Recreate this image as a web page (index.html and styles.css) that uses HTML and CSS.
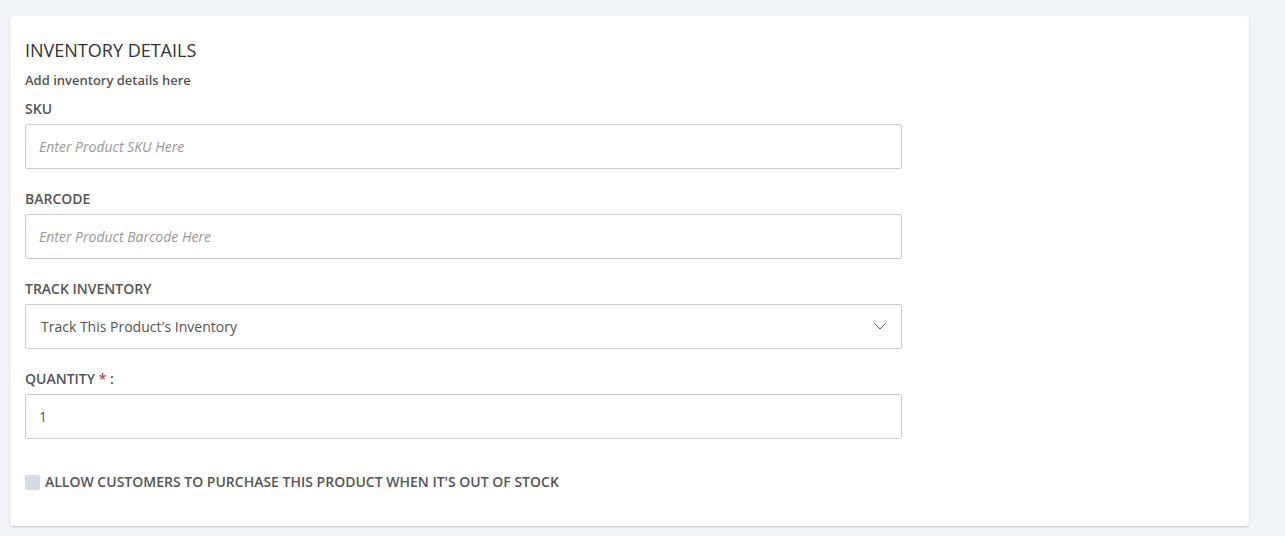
FILE: index.html
```html
<!DOCTYPE html>
<html>
<head>
<meta charset="utf-8">
<link rel="stylesheet" href="styles.css">
</head>
<body>
<div class="page">
  <section class="card">
    <h2 class="title">INVENTORY DETAILS</h2>
    <p class="subtitle">Add inventory details here</p>
    <div class="form">
      <div class="field">
        <label class="label">SKU</label>
        <input class="input" type="text" placeholder="Enter Product SKU Here">
      </div>
      <div class="field">
        <label class="label">BARCODE</label>
        <input class="input" type="text" placeholder="Enter Product Barcode Here">
      </div>
      <div class="field">
        <label class="label">TRACK INVENTORY</label>
        <div class="select">
          <span class="select-text">Track This Product's Inventory</span>
          <svg class="chevron" width="12" height="7" viewBox="0 0 12 7"><path d="M0.5 0.5 L6 6 L11.5 0.5" fill="none" stroke="#555" stroke-width="1"/></svg>
        </div>
      </div>
      <div class="field">
        <label class="label">QUANTITY <span class="req">*</span> :</label>
        <input class="input" type="text" value="1">
      </div>
    </div>
    <div class="check-row">
      <span class="checkbox"></span>
      <span class="check-label">ALLOW CUSTOMERS TO PURCHASE THIS PRODUCT WHEN IT'S OUT OF STOCK</span>
    </div>
  </section>
</div>
</body>
</html>
```
FILE: styles.css
```css
html, body {
  margin: 0;
  padding: 0;
  background: #f0f3f8;
  font-family: "Open Sans", "Liberation Sans", sans-serif;
}
.page {
  padding: 16px 36px 10px 10px;
}
.card {
  background: #fff;
  border-radius: 4px;
  box-shadow: 0 1px 2px rgba(0,0,0,0.18);
  padding: 24px 15px 20px;
  height: 510px;
  box-sizing: border-box;
}
.title {
  margin: 0;
  font-size: 18px;
  line-height: 20px;
  font-weight: 400;
  color: #333;
}
.subtitle {
  margin: 11px 0 0;
  font-size: 13px;
  line-height: 18px;
  font-weight: 600;
  color: #555;
}
.form {
  width: 877px;
  margin-top: 11px;
  display: flex;
  flex-direction: column;
  gap: 21px;
}
.field {
  display: flex;
  flex-direction: column;
  gap: 6px;
}
.label {
  font-size: 14px;
  line-height: 18px;
  font-weight: 600;
  color: #555;
}
.req {
  color: #b94a48;
}
.input, .select {
  box-sizing: border-box;
  height: 45px;
  width: 100%;
  border: 1px solid #ccc;
  border-radius: 2px;
  background: #fff;
  padding: 0 13px;
  font-family: "Open Sans", "Liberation Sans", sans-serif;
  font-size: 14px;
  color: #555;
  outline: none;
}
.input::placeholder {
  font-style: italic;
  color: #999;
}
.select {
  display: flex;
  align-items: center;
  justify-content: space-between;
  padding: 0 15px 0 15px;
}
.select-text {
  color: #555;
}
.check-row {
  margin-top: 34px;
  display: flex;
  align-items: center;
  gap: 5px;
}
.checkbox {
  width: 15px;
  height: 15px;
  border-radius: 2px;
  background: #d4dbe7;
}
.check-label {
  font-size: 14px;
  line-height: 18px;
  font-weight: 600;
  color: #555;
}
```
